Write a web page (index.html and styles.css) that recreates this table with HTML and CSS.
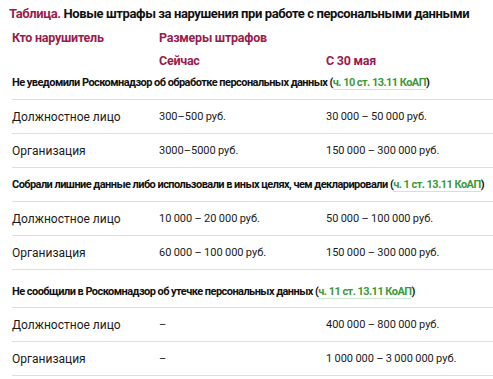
FILE: index.html
```html
<!DOCTYPE html>
<html lang="ru">
<head>
<meta charset="utf-8">
<link rel="stylesheet" href="styles.css">
</head>
<body>
<p class="title"><span class="accent">Таблица.</span> Новые штрафы за нарушения при работе с персональными данными</p>
<table class="fines">
  <thead>
    <tr class="head1">
      <th>Кто нарушитель</th>
      <th colspan="2">Размеры штрафов</th>
    </tr>
    <tr class="head2">
      <th></th>
      <th>Сейчас</th>
      <th>С 30 мая</th>
    </tr>
  </thead>
  <tbody>
    <tr class="section s1">
      <td colspan="3">Не уведомили Роскомнадзор об обработке персональных данных (<a class="law">ч. 10 ст. 13.11 КоАП</a>)</td>
    </tr>
    <tr class="row">
      <td>Должностное лицо</td><td class="num">300–500 руб.</td><td class="num">30 000 – 50 000 руб.</td>
    </tr>
    <tr class="row">
      <td>Организация</td><td class="num">3000–5000 руб.</td><td class="num">150 000 – 300 000 руб.</td>
    </tr>
    <tr class="section s2">
      <td colspan="3">Собрали лишние данные либо использовали в иных целях, чем декларировали (<a class="law">ч. 1 ст. 13.11 КоАП</a>)</td>
    </tr>
    <tr class="row">
      <td>Должностное лицо</td><td class="num">10 000 – 20 000 руб.</td><td class="num">50 000 – 100 000 руб.</td>
    </tr>
    <tr class="row">
      <td>Организация</td><td class="num">60 000 – 100 000 руб.</td><td class="num">150 000 – 300 000 руб.</td>
    </tr>
    <tr class="section s3">
      <td colspan="3">Не сообщили в Роскомнадзор об утечке персональных данных (<a class="law">ч. 11 ст. 13.11 КоАП</a>)</td>
    </tr>
    <tr class="row">
      <td>Должностное лицо</td><td class="num">–</td><td class="num">400 000 – 800 000 руб.</td>
    </tr>
    <tr class="row">
      <td>Организация</td><td class="num">–</td><td class="num">1 000 000 – 3 000 000 руб.</td>
    </tr>
  </tbody>
</table>
</body>
</html>
```

FILE: styles.css
```css
html, body {
  margin: 0;
  padding: 0;
  background: #ffffff;
}
body {
  font-family: Roboto, "Liberation Sans", sans-serif;
  color: #1a1a1a;
  font-size: 12px;
}
.title {
  margin: 0;
  padding-left: 9px;
  height: 27px;
  line-height: 28px;
  font-size: 13px;
  letter-spacing: -0.4px;
  font-weight: 700;
  color: #111;
  white-space: nowrap;
}
.accent {
  color: #9a1c4c;
}
.fines {
  margin-left: 12px;
  width: 481px;
  border-collapse: collapse;
  table-layout: fixed;
}
.fines th,
.fines td {
  padding: 0;
  text-align: left;
  white-space: nowrap;
}
.fines th {
  color: #9a1c4c;
  font-size: 12.5px;
  letter-spacing: -0.25px;
  font-weight: 700;
}
.fines th:nth-child(1) { width: 147px; }
.head1 th { height: 20px; vertical-align: middle; }
.head2 th { height: 26px; vertical-align: middle; }
.head2 th:nth-child(2) { width: 167px; }
.section td {
  font-size: 11px;
  letter-spacing: -0.55px;
  font-weight: 700;
  color: #111;
  border-bottom: 1px solid #dedede;
  vertical-align: middle;
}
.s1 td { height: 18px; padding-bottom: 8px; }
.s2 td { height: 33px; }
.s3 td { height: 31px; padding-top: 6px; }
.row td {
  height: 33px;
  border-bottom: 1px solid #dedede;
  vertical-align: middle;
}
.row td:nth-child(1) { width: 147px; }
.row td:nth-child(2) { width: 167px; }
.row .num {
  font-size: 11px;
  word-spacing: -0.4px;
}
.law {
  color: #3a9a3a;
  text-decoration: none;
  border-bottom: 1px solid #cde6cd;
}
```
